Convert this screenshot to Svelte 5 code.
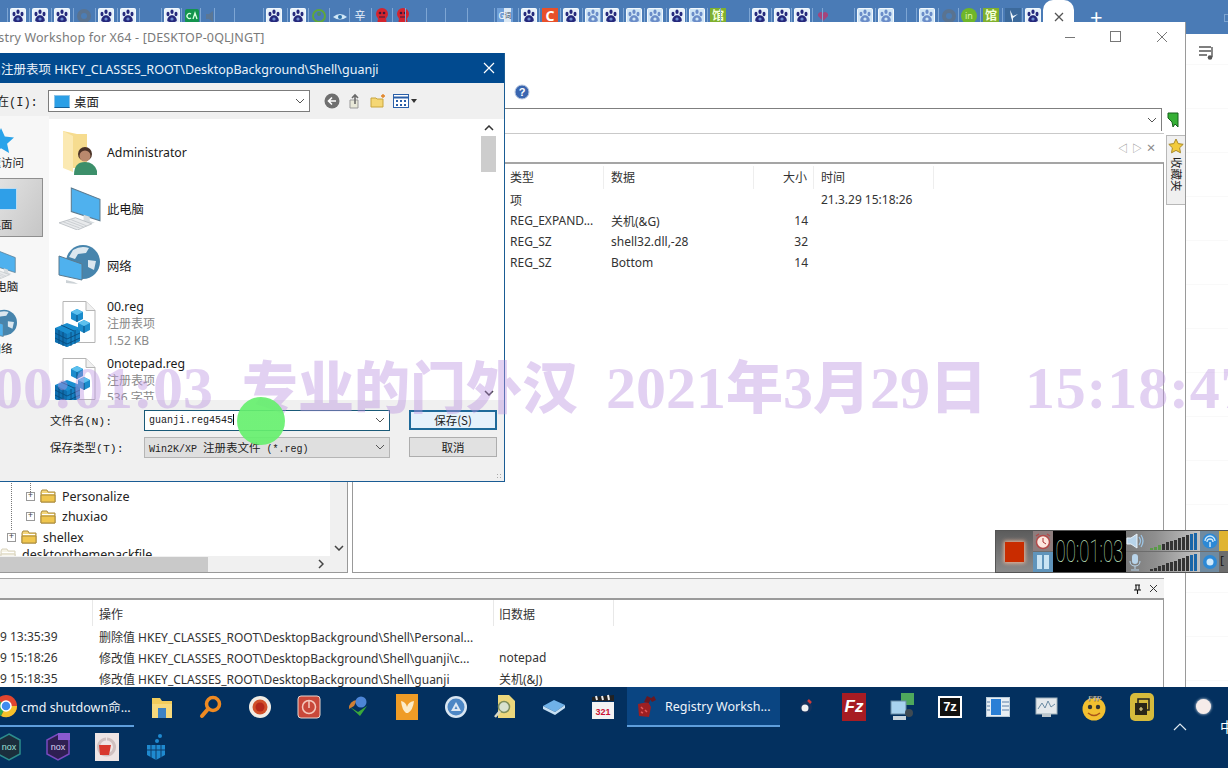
<script>
const tabSpots = [[18,'paw'],[40,'paw'],[62,'paw'],[84,'grey'],[106,'paw'],[128,'paw'],[150,'none'],[172,'paw'],[192,'ca'],[211,'spk'],[225,'none'],[245,'none'],[274,'paw'],[298,'paw'],[319,'ring'],[340,'eye'],[360,'zh'],[382,'red'],[403,'red'],[416,'none'],[437,'none'],[456,'none'],[478,'none'],[505,'g'],[529,'paw'],[550,'c'],[571,'paw'],[593,'pawl'],[611,'paw'],[634,'pawl'],[655,'pawl'],[677,'paw'],[697,'pawl'],[718,'guan'],[731,'none'],[760,'paw'],[782,'paw'],[802,'paw'],[823,'pink'],[833,'none'],[865,'pawl'],[886,'pawl'],[917,'none'],[927,'pawl'],[949,'grey'],[969,'in'],[991,'guan'],[1013,'bird'],[1033,'paw']];
const tabs = tabSpots.map((t,i)=>({type:t[1],w:(i<tabSpots.length-1?tabSpots[i+1][0]:1051)-t[0]}));
const rows = [
 {t:'项',d:'',s:'',time:'21.3.29 15:18:26'},
 {t:'REG_EXPAND...',d:'关机(&G)',s:'14',time:''},
 {t:'REG_SZ',d:'shell32.dll,-28',s:'32',time:''},
 {t:'REG_SZ',d:'Bottom',s:'14',time:''}
];
const logs = [
 ['9 13:35:39','删除值 HKEY_CLASSES_ROOT\\DesktopBackground\\Shell\\Personal...',''],
 ['9 15:18:26','修改值 HKEY_CLASSES_ROOT\\DesktopBackground\\Shell\\guanji\\c...','notepad'],
 ['9 15:18:35','修改值 HKEY_CLASSES_ROOT\\DesktopBackground\\Shell\\guanji','关机(&J)']
];
const bars = [0,1,2,3,4,5,6,7,8,9,10,11];
</script>

{#snippet tabIcon(type)}
  {#if type==='paw' || type==='pawl'}
    <svg width="16" height="16" viewBox="0 0 16 16"><rect x=".5" y=".5" width="15" height="15" rx="1" fill={type==='paw'?'#e6f1fa':'#cfe5f6'} stroke="#f2f8fd"/><g fill={type==='paw'?'#24287c':'#6a8cc8'}><ellipse cx="4" cy="6" rx="1.500" ry="2.300"/><ellipse cx="8" cy="3.800" rx="1.600" ry="2.300"/><ellipse cx="12" cy="6" rx="1.500" ry="2.300"/><path d="M8 7.200c2.800 0 4.800 2.800 4.800 5 0 1.800-2.400 1.800-4.800 1.800s-4.800 0-4.800-1.800c0-2.200 2-5 4.800-5z"/></g><circle cx="8" cy="11" r="1.600" fill={type==='paw'?'#6f8fd0':'#cfe6f6'}/></svg>
  {:else if type==='grey'}
    <svg width="16" height="16" viewBox="0 0 16 16"><circle cx="8" cy="8" r="7" fill="#5a7390"/><circle cx="8" cy="8" r="3" fill="#4c7db5"/></svg>
  {:else if type==='ca'}
    <svg width="16" height="16" viewBox="0 0 16 16"><rect x="1" y="1" width="14" height="14" rx="2" fill="#13944e"/><path d="M7 6a2.500 2.500 0 1 0 0 4M9 11l2-6 2 6" stroke="#d8ffe0" stroke-width="1.300" fill="none"/></svg>
  {:else if type==='spk'}
    <svg width="16" height="16" viewBox="0 0 16 16"><path d="M3 6h3l4-3v11l-4-3H3z" fill="#5b7795"/></svg>
  {:else if type==='ring'}
    <svg width="16" height="16" viewBox="0 0 16 16"><circle cx="8" cy="8" r="6" fill="none" stroke="#5fa63c" stroke-width="2"/><circle cx="8" cy="6" r="2" fill="#4f8f60"/></svg>
  {:else if type==='eye'}
    <svg width="16" height="16" viewBox="0 0 16 16"><path d="M1 9q7-6 14 0q-7 5-14 0z" fill="#cfe6f6"/><circle cx="8" cy="9" r="2" fill="#2a6fa8"/></svg>
  {:else if type==='zh'}
    <span class="tabtxt zh">辛</span>
  {:else if type==='red'}
    <svg width="16" height="16" viewBox="0 0 16 16"><ellipse cx="8" cy="6" rx="6" ry="6" fill="#d4242e"/><ellipse cx="8" cy="13" rx="4.500" ry="3" fill="#d4242e"/><circle cx="6" cy="5" r="1.300" fill="#3b1b3b"/><circle cx="10" cy="5" r="1.300" fill="#3b1b3b"/><path d="M5 9h6" stroke="#3b1b3b"/></svg>
  {:else if type==='g'}
    <span class="tabtxt gbox">G<i>词</i></span>
  {:else if type==='c'}
    <span class="tabtxt cbox">C</span>
  {:else if type==='guan'}
    <span class="tabtxt guan">馆</span>
  {:else if type==='pink'}
    <svg width="16" height="16" viewBox="0 0 16 16"><path d="M8 13L3 8a3 3 0 0 1 5-3a3 3 0 0 1 5 3z" fill="#a5447c"/></svg>
  {:else if type==='in'}
    <span class="tabtxt inbox">in</span>
  {:else if type==='bird'}
    <svg width="16" height="16" viewBox="0 0 16 16"><rect width="16" height="16" fill="#3c6a9c"/><path d="M5 2l3 6 5-2-5 4v5L6 9z" fill="#eef6fb"/></svg>
  {/if}
{/snippet}

{#snippet regIcon()}
  <svg class="fileicon" width="42" height="46" viewBox="0 0 42 46">
    <path d="M8 .5h23l9 9v32H8z" fill="#fff" stroke="#b5b5b5"/><path d="M31 .5v9h9" fill="#f0f0f0" stroke="#b5b5b5"/>
    <path d="M0 27l12-5 13 5v13l-13 6-12-5z" fill="#1a8ed0"/>
    <path d="M0 27l12 6v13l-12-5z" fill="#0f6fb0"/>
    <path d="M12 33l13-6v13l-13 6z" fill="#1480c2"/>
    <path d="M4 29v14M8 31v14M16 31v14M20 29v14M0 32l12 6 13-6M0 37l12 6 13-6M6 24l13 6" stroke="#0a4c7e" stroke-width=".9" fill="none"/>
    <path d="M16 11l6-3 6 3v7l-6 3-6-3z" fill="#1b8ccc"/><path d="M16 11l6 3 6-3-6-3z" fill="#5cc0ee"/><path d="M22 14v7" stroke="#0a4c7e" fill="none"/>
    <path d="M23 22l6-3 6 3v7l-6 3-6-3z" fill="#1b8ccc"/><path d="M23 22l6 3 6-3-6-3z" fill="#5cc0ee"/><path d="M29 25v7" stroke="#0a4c7e" fill="none"/>
  </svg>
{/snippet}

{#snippet monitor(w)}
  <svg width={w} height={w} viewBox="0 0 42 42">
    <path d="M13 1l28 11v21L13 24z" fill="#4fb1ee" stroke="#5c7a8e"/>
    <path d="M25 27l6 2v4l5 2-12 3-6-2 7-3z" fill="#d8dde0"/>
    <path d="M1 35l16-5 16 6-14 6z" fill="#e8eaec" stroke="#b7bcc0" stroke-width=".8"/>
    <path d="M5 34l16 6M9 33l16 6M13 32l15 6" stroke="#c0c4c8" stroke-width=".7"/>
  </svg>
{/snippet}

{#snippet globe(w)}
  <svg width={w} height={w} viewBox="0 0 42 42">
    <circle cx="25" cy="18" r="17" fill="#4785ad"/><path d="M15 6q8-5 16-2l-3 5-8 1-3 5-6-2zM30 16l8 1-2 9-6-3z" fill="#dbe7ef"/>
    <path d="M1 14l23 8v16L1 33z" fill="#4fb1ee" stroke="#5c7a8e" transform="translate(0 -2)"/>
    <path d="M8 36l8 2 4 2-12-1z" fill="#ccd2d6"/>
  </svg>
{/snippet}

{#snippet folder(pale)}
  <svg class="fold" width="17" height="14" viewBox="0 0 17 14"><path d="M1 3l1-2h5l1 2h7v10H1z" fill={pale?'#f6f3e6':'#f4d67c'} stroke={pale?'#d8d2bc':'#a98a3c'}/><path d="M1 6h14v7H1z" fill={pale?'#f8f6ee':'#f0c64e'} stroke={pale?'#d8d2bc':'#a98a3c'}/><path d="M2 4.500h12" stroke="#fff"/></svg>
{/snippet}

<div class="screen">
  <header class="tabbar">
    {#each tabs as t}
      <span class="slot" style="width:{t.w}px">{@render tabIcon(t.type)}</span>
    {/each}
    <span class="curtab"><svg width="10" height="10" viewBox="0 0 10 10"><path d="M1 1l8 8M9 1l-8 8" stroke="#555" stroke-width="1.300"/></svg></span>
    <span class="plus">+</span>
    <span class="winmin"></span>
  </header>

  <div class="pagearea">
    <svg class="note" width="18" height="16" viewBox="0 0 18 16"><path d="M1 2h12M1 6h12M1 10h8" stroke="#555" stroke-width="1.400"/><path d="M14 2v10" stroke="#555" stroke-width="1.400"/><circle cx="12" cy="12.500" r="2.300" fill="#555"/></svg>
  </div>

  <section class="regwin">
    <div class="rtitle">
      <span class="rtitletext">Registry Workshop for X64 - [DESKTOP-0QLJNGT]</span>
      <span class="wc"><svg width="12" height="12" viewBox="0 0 12 12"><path d="M1 6.500h10" stroke="#777"/></svg></span>
      <span class="wc"><svg width="12" height="12" viewBox="0 0 12 12"><rect x=".5" y=".5" width="10" height="10" fill="none" stroke="#777"/></svg></span>
      <span class="wc"><svg width="12" height="12" viewBox="0 0 12 12"><path d="M1 1l10 10M11 1L1 11" stroke="#777"/></svg></span>
    </div>
    <div class="rtool">
      <svg width="16" height="16" viewBox="0 0 16 16"><circle cx="8" cy="8" r="7" fill="#3a66b0" stroke="#b8c8e0"/><text x="8" y="12" text-anchor="middle" class="q">?</text></svg>
    </div>
    <div class="raddr">
      <div class="addrbox"><svg width="10" height="6" viewBox="0 0 10 6"><path d="M1 1l4 4 4-4" fill="none" stroke="#555"/></svg></div>
      <svg class="flag" width="14" height="16" viewBox="0 0 14 16"><path d="M2 1h10v14l-3-3-2 3-1-5-4-4z" fill="#35b035" stroke="#17611c"/></svg>
    </div>
    <div class="rstrip">
      <span class="nav">◁</span><span class="nav">▷</span><span class="nav x">×</span>
    </div>
    <div class="rmain">
      <div class="tree">
        <div class="treebody">
          <span class="dot a"></span><span class="dot b"></span>
          <div class="tnode lvl2"><span class="exp">+</span>{@render folder(false)}Personalize</div>
          <div class="tnode lvl2"><span class="exp">+</span>{@render folder(false)}zhuxiao</div>
          <div class="tnode lvl1"><span class="exp">+</span>{@render folder(false)}shellex</div>
          <div class="tnode lvl0">{@render folder(true)}desktopthemepackfile</div>
          <div class="vscroll"><svg width="10" height="6" viewBox="0 0 10 6"><path d="M1 1l4 4 4-4" fill="none" stroke="#444" stroke-width="1.500"/></svg></div>
        </div>
        <div class="hscroll"><span class="hthumb"></span><svg width="6" height="10" viewBox="0 0 6 10"><path d="M1 1l4 4-4 4" fill="none" stroke="#444" stroke-width="1.500"/></svg></div>
      </div>
      <div class="listp">
        <div class="lhead"><span class="c0"></span><span class="c1">类型</span><span class="c2">数据</span><span class="c3">大小</span><span class="c4">时间</span></div>
        {#each rows as r}
          <div class="lrow"><span class="c0"></span><span class="c1">{r.t}</span><span class="c2">{r.d}</span><span class="c3">{r.s}</span><span class="c4">{r.time}</span></div>
        {/each}
      </div>
    </div>
    <div class="logbar">
      <svg width="9" height="10" viewBox="0 0 9 10"><path d="M2 1h5M3 1v5M6 1v5M1 6h7M4.500 6v4" stroke="#111" stroke-width="1.100" fill="none"/></svg>
      <svg width="9" height="9" viewBox="0 0 9 9"><path d="M1 1l7 7M8 1L1 8" stroke="#333"/></svg>
    </div>
    <div class="logp">
      <div class="loghead"><span class="l0"></span><span class="l1">操作</span><span class="l2">旧数据</span></div>
      {#each logs as l}
        <div class="logrow"><span class="l0">{l[0]}</span><span class="l1">{l[1]}</span><span class="l2">{l[2]}</span></div>
      {/each}
    </div>
  </section>

  <aside class="favtab">
    <svg width="16" height="16" viewBox="0 0 16 16"><path d="M8 1l2.200 4.600 5 .7-3.600 3.500.9 5L8 12.400l-4.500 2.400.9-5L.8 6.300l5-.7z" fill="#f2cb3c" stroke="#a98a2a"/></svg>
    <span class="favtext">收藏夹</span>
  </aside>

  <section class="dialog">
    <div class="dtitle"><span>导出注册表项 HKEY_CLASSES_ROOT\DesktopBackground\Shell\guanji</span><svg width="12" height="12" viewBox="0 0 12 12"><path d="M1 1l10 10M11 1L1 11" stroke="#fff" stroke-width="1.200"/></svg></div>
    <div class="dtool">
      <span class="savein">保存在(I):</span>
      <div class="dcombo">
        <span class="bluebox"></span><span class="dcombot">桌面</span>
        <svg width="10" height="6" viewBox="0 0 10 6"><path d="M1 1l4 4 4-4" fill="none" stroke="#555"/></svg>
      </div>
      <div class="dicons">
        <svg width="16" height="16" viewBox="0 0 16 16"><circle cx="8" cy="8" r="7.500" fill="#6f6f6f"/><path d="M12 8H5M8 4.500L4.500 8 8 11.500" stroke="#fff" stroke-width="1.600" fill="none"/></svg>
        <svg width="16" height="16" viewBox="0 0 16 16"><path d="M3 7h8v8H3z" fill="#e8e8d8" stroke="#999"/><path d="M8 11V2M5 5l3-3 3 3" stroke="#6a6a6a" stroke-width="1.600" fill="none"/></svg>
        <svg width="16" height="16" viewBox="0 0 16 16"><path d="M1 5h5l1 1h6v8H1z" fill="#f5d775" stroke="#c9a53c"/><path d="M13 1v4M11 3h4" stroke="#e08020" stroke-width="1.300"/></svg>
        <span class="viewbtn"><svg width="16" height="14" viewBox="0 0 16 14"><rect x=".5" y=".5" width="15" height="13" fill="#fff" stroke="#2a5fa8"/><path d="M1 3.500h14" stroke="#2a5fa8" stroke-width="2"/><path d="M3 6h2v2H3zM7 6h2v2H7zM11 6h2v2h-2zM3 10h2v2H3zM7 10h2v2H7zM11 10h2v2h-2z" fill="#2a5fa8"/></svg><i></i></span>
      </div>
    </div>
    <div class="dmid">
      <nav class="places">
        <div class="place first"><svg width="28" height="28" viewBox="0 0 28 28"><path d="M14 1l3.800 8.600 9.200 1-6.900 6.200 2 9.200-8.100-4.700-8.100 4.700 2-9.200L1 10.600l9.200-1z" fill="#29a3ea"/></svg><span>快速访问</span></div>
        <div class="place sel"><span class="deskicon"></span><span>桌面</span></div>
        <div class="place">{@render monitor(30)}<span>此电脑</span></div>
        <div class="place">{@render globe(32)}<span>网络</span></div>
      </nav>
      <div class="flist">
        <div class="fitem">
          <svg class="fileicon" width="42" height="46" viewBox="0 0 42 46"><path d="M8 1l14 3h10v34H8z" fill="#f6dc8f"/><path d="M8 1l10 5v36l-10-4z" fill="#fbe9b2"/><circle cx="30" cy="24" r="7" fill="#4a3226"/><circle cx="30" cy="26" r="5.500" fill="#b9896d"/><path d="M19 45q0-13 11-13t13 13z" fill="#3c8f6a"/></svg>
          <div class="ftext"><b>Administrator</b></div>
        </div>
        <div class="fitem">
          <span class="fileicon shift">{@render monitor(43)}</span>
          <div class="ftext"><b>此电脑</b></div>
        </div>
        <div class="fitem">
          <span class="fileicon shift">{@render globe(42)}</span>
          <div class="ftext"><b>网络</b></div>
        </div>
        <div class="fitem">
          {@render regIcon()}
          <div class="ftext"><b>00.reg</b><i>注册表项</i><i>1.52 KB</i></div>
        </div>
        <div class="fitem">
          {@render regIcon()}
          <div class="ftext"><b>0notepad.reg</b><i>注册表项</i><i>536 字节</i></div>
        </div>
        <div class="dscroll">
          <svg width="10" height="6" viewBox="0 0 10 6"><path d="M1 5l4-4 4 4" fill="none" stroke="#333" stroke-width="1.500"/></svg>
          <span class="dthumb"></span>
          <svg class="dn" width="10" height="6" viewBox="0 0 10 6"><path d="M1 1l4 4 4-4" fill="none" stroke="#333" stroke-width="1.500"/></svg>
        </div>
      </div>
    </div>
    <div class="dform">
      <div class="frow">
        <label class="flabel" for="fname">文件名(N):</label>
        <div class="finput focus"><span id="fname" class="mono">guanji.reg4545<u></u></span><svg width="10" height="6" viewBox="0 0 10 6"><path d="M1 1l4 4 4-4" fill="none" stroke="#555"/></svg></div>
        <button class="dbtn primary">保存(S)</button>
      </div>
      <div class="frow">
        <span class="flabel">保存类型(T):</span>
        <div class="finput drop"><span class="mono">Win2K/XP <b>注册表文件</b> (*.reg)</span><svg width="10" height="6" viewBox="0 0 10 6"><path d="M1 1l4 4 4-4" fill="none" stroke="#555"/></svg></div>
        <button class="dbtn">取消</button>
      </div>
      <span class="grip"></span>
    </div>
  </section>

  <div class="recorder">
    <div class="recstop"><span></span></div>
    <div class="recmini">
      <span class="alarm"><svg width="18" height="18" viewBox="0 0 18 18"><circle cx="9" cy="10" r="6.500" fill="#fde8e0" stroke="#b34a4a" stroke-width="1.500"/><path d="M9 6v4l3 2" stroke="#a33" fill="none"/><path d="M2 4l3-2M16 4l-3-2" stroke="#b34a4a" stroke-width="1.500"/></svg></span>
      <span class="pause"><i></i><i></i></span>
    </div>
    <div class="timer"><span>00:01:03</span></div>
    <div class="vols">
      <div class="vol">
        <svg width="18" height="18" viewBox="0 0 18 18"><path d="M1 6h4l6-4v14l-6-4H1z" fill="#b8d4ea" stroke="#e8f2fa"/><path d="M13 5q3 4 0 8M15 3q4 6 0 12" stroke="#9cc4e4" fill="none" stroke-width="1.300"/></svg>
        <span class="bars top">{#each bars as b}<i class:g={b<3} class:b={b>9} style="height:{2+b*1.400}px"></i>{/each}</span>
      </div>
      <div class="vol">
        <svg width="18" height="18" viewBox="0 0 18 18"><rect x="6" y="1" width="6" height="10" rx="3" fill="#b8d4ea"/><path d="M4 8q0 5 5 5t5-5M9 13v3M5 17h8" stroke="#b8d4ea" fill="none"/></svg>
        <span class="bars">{#each bars as b}<i class:b={b>9} style="height:{2+b*1.400}px"></i>{/each}</span>
      </div>
    </div>
    <div class="rectools">
      <span class="rt"><svg width="16" height="16" viewBox="0 0 16 16"><circle cx="8" cy="8" r="7.500" fill="#2c89d6"/><path d="M3 8a5 5 0 0 1 10 0M5 9a3 3 0 0 1 6 0" stroke="#cfe9fb" fill="none" stroke-width="1.300"/><path d="M8 9v5" stroke="#cfe9fb" stroke-width="1.500"/></svg></span>
      <span class="rt"><svg width="16" height="16" viewBox="0 0 16 16"><circle cx="8" cy="8" r="7" fill="#2c89d6"/><circle cx="8" cy="8" r="3.500" fill="#cfe9fb"/></svg></span>
    </div>
    <div class="recedge"><span class="yel"></span><span class="brk">[ ]</span></div>
  </div>

  <div class="watermark"><span>00:01:03</span> <b>专业的门外汉</b> <span class="d">2021<b>年</b>3<b>月</b>29<b>日</b></span> <span class="t">15:18:47</span></div>
  <span class="pointer"></span>

  <footer class="taskbar">
    <div class="tbrow">
      <div class="tbtask">
        <svg width="24" height="24" viewBox="0 0 24 24"><circle cx="12" cy="12" r="11" fill="#e2452f"/><path d="M12 12L23 12A11 11 0 0 1 7 22z" fill="#f6c12a"/><path d="M12 12L7 22A11 11 0 0 1 3 5z" fill="#2fa84f"/><circle cx="12" cy="12" r="5" fill="#3f8cf0" stroke="#fff" stroke-width="1.500"/></svg>
        <span>cmd shutdown命...</span>
      </div>
      <span class="tbi w"><svg width="24" height="24" viewBox="0 0 24 24"><path d="M2 3h8l2 3h10v17H2z" fill="#f2cc5c"/><path d="M2 9h20v14H2z" fill="#f7d97c"/><rect x="8" y="13" width="8" height="10" fill="#3e82c4"/></svg></span>
      <span class="tbi w"><svg width="24" height="24" viewBox="0 0 24 24"><circle cx="14" cy="9" r="6.500" fill="none" stroke="#ef8a22" stroke-width="3.500"/><path d="M9 14l-6 7" stroke="#ef8a22" stroke-width="4" stroke-linecap="round"/></svg></span>
      <span class="tbi w"><svg width="24" height="24" viewBox="0 0 24 24"><circle cx="12" cy="12" r="11" fill="#f1ece4"/><circle cx="12" cy="12" r="7.500" fill="#d0502a"/><circle cx="12" cy="12" r="4.500" fill="#b6281a"/></svg></span>
      <span class="tbi w"><svg width="24" height="24" viewBox="0 0 24 24"><rect x="1" y="1" width="22" height="22" rx="3" fill="#c9483a" stroke="#e7d5cf"/><circle cx="12" cy="12" r="6.500" fill="none" stroke="#f4c8bc" stroke-width="1.500"/><path d="M12 6v7" stroke="#f4c8bc" stroke-width="1.500"/></svg></span>
      <span class="tbi w"><svg width="24" height="24" viewBox="0 0 24 24"><path d="M3 14a8 8 0 0 1 8-9l-3 6z" fill="#d07e32"/><circle cx="15" cy="7" r="5.500" fill="#4d85d6"/><path d="M4 12l8 5 9-6-7 10z" fill="#3aa83a"/></svg></span>
      <span class="tbi w"><svg width="24" height="26" viewBox="0 0 24 26"><rect x="1" y="0" width="22" height="26" fill="#ef9c26"/><path d="M6 7q5 1 6 6 1-5 7-6-1 9-6 12h-2q-4-3-5-12z" fill="#fcecc8"/></svg></span>
      <span class="tbi w"><svg width="24" height="24" viewBox="0 0 24 24"><circle cx="12" cy="12" r="11" fill="#d9e6f2"/><circle cx="12" cy="12" r="8.500" fill="#4d87c5"/><path d="M7 16l5-9 5 9z" fill="#dfe9f3"/><path d="M10.500 14l1.500-3 1.500 3z" fill="#4d87c5"/></svg></span>
      <span class="tbi w"><svg width="24" height="26" viewBox="0 0 24 26"><path d="M5 1h11l6 6v17H5z" fill="#ecd77c"/><circle cx="11" cy="13" r="5.500" fill="#d8e2d0" stroke="#7f8f5c" stroke-width="1.500"/><path d="M7 17l-5 6" stroke="#d8d8c8" stroke-width="2.500"/></svg></span>
      <span class="tbi w"><svg width="24" height="24" viewBox="0 0 24 24"><path d="M1 11l11-6 11 5-10 7z" fill="#6fb1e8"/><path d="M1 11l12 6v3L1 14zM13 17l10-7v3l-10 7z" fill="#c6dff3"/></svg></span>
      <span class="tbi w"><svg width="24" height="26" viewBox="0 0 24 26"><rect x="1" y="8" width="22" height="17" fill="#f3f3f3"/><path d="M1 3l22-2v6H1z" fill="#222"/><path d="M5 2l1 4M11 2l1 4M17 1l1 5" stroke="#eee" stroke-width="2"/><text x="12" y="21" text-anchor="middle" class="cal">321</text></svg></span>
      <div class="tbtask active">
        <svg width="24" height="24" viewBox="0 0 24 24"><path d="M3 10l10-2 3 5-2 10-10-1z" fill="#9d1f22"/><path d="M9 8l3-6 4 2-2 5zM15 5l4-3 2 4-4 2z" fill="#6a1820"/><path d="M6 13l2 2M10 16l2 2M6 18l2 1" stroke="#e25a5a" stroke-width="1.500"/></svg>
        <span>Registry Worksh...</span>
      </div>
      <span class="tbi gap"><svg width="20" height="20" viewBox="0 0 20 20"><circle cx="10" cy="10" r="6" fill="#15325c"/><circle cx="9" cy="11" r="3.500" fill="#f2f2f2"/><path d="M12 3l3 3" stroke="#d43a3a" stroke-width="2.500"/></svg></span>
      <span class="tbi"><span class="fz">Fz</span></span>
      <span class="tbi"><svg width="24" height="28" viewBox="0 0 24 28"><rect x="11" y="0" width="13" height="12" fill="#4ea85c"/><rect x="1" y="8" width="15" height="13" fill="#a8d2ee" stroke="#6a8ba3"/><path d="M3 23h13v4H3z" fill="#c8d4dc"/><circle cx="19" cy="20" r="4" fill="#3f4a52"/></svg></span>
      <span class="tbi"><span class="sz">7z</span></span>
      <span class="tbi"><svg width="24" height="20" viewBox="0 0 24 20"><rect x=".5" y=".5" width="23" height="19" fill="#e7eef4" stroke="#b9cad8"/><rect x="5" y="2" width="10" height="16" fill="#2a7fd6"/><path d="M1 5h3M1 9h3M1 13h3M16 5h7M16 9h7M16 13h7" stroke="#5a7fa8"/></svg></span>
      <span class="tbi"><svg width="24" height="24" viewBox="0 0 24 24"><rect x="2" y="3" width="21" height="16" fill="#e4e9ec" stroke="#9fb0bb"/><path d="M4 14l4-6 3 5 3-7 3 6 4-3" stroke="#6a8ba3" fill="none"/><path d="M8 19h9v3H8z" fill="#bcc6cc"/></svg></span>
      <span class="tbi"><svg width="26" height="28" viewBox="0 0 26 28"><circle cx="13" cy="16" r="11.500" fill="#f2bf30"/><circle cx="9" cy="14" r="2.200" fill="#333"/><circle cx="17" cy="14" r="2.200" fill="#333"/><path d="M7 20q6 5 12 0" stroke="#a8541a" stroke-width="1.500" fill="none"/><text x="14" y="8" text-anchor="middle" class="ftp">FTP</text></svg></span>
      <span class="tbi"><svg width="24" height="28" viewBox="0 0 24 28"><rect x="0" y="0" width="24" height="28" rx="5" fill="#d6ba3c"/><rect x="8" y="6" width="11" height="11" fill="none" stroke="#222" stroke-width="1.500"/><rect x="5" y="10" width="12" height="12" fill="#2a2618"/><path d="M9 16h4M11 14v4" stroke="#e8d88c" stroke-width="1.200"/></svg></span>
      <span class="orb"></span>
    </div>
    <div class="tbrow second">
      <span class="tbi w"><svg width="26" height="28" viewBox="0 0 26 28"><path d="M13 1l11 6v14l-11 6-11-6V7z" fill="#1b2e3c" stroke="#2d8c8c" stroke-width="1.500"/><text x="13" y="17" text-anchor="middle" class="nox teal">nox</text></svg></span>
      <span class="tbi w"><svg width="26" height="28" viewBox="0 0 26 28"><path d="M13 1l11 6v14l-11 6-11-6V7z" fill="#2e1f52" stroke="#7a4ac0" stroke-width="1.500"/><text x="13" y="17" text-anchor="middle" class="nox">nox</text><rect x="13" y="0" width="12" height="7" fill="#8a5ad0"/></svg></span>
      <span class="tbi w"><svg width="24" height="28" viewBox="0 0 24 28"><rect width="24" height="28" fill="#eee4e4"/><path d="M12 6a8 8 0 1 1-1 0" fill="none" stroke="#d0c0c0" stroke-width="3"/><path d="M4 12h12l-2 10H5zM8 8l4 2" fill="#d8382e"/></svg></span>
      <span class="tbi w"><svg width="22" height="28" viewBox="0 0 22 28"><path d="M2 12h18v10l-9 5-9-5z" fill="#1f8ad0"/><path d="M6 12v13M11 12v15M16 12v13M2 17h18" stroke="#0c3a6a"/><circle cx="15" cy="3" r="2" fill="#1f8ad0"/><circle cx="12" cy="8" r="2" fill="#1f8ad0"/></svg></span>
      <span class="ime">中</span>
      <svg class="caret" width="14" height="8" viewBox="0 0 14 8"><path d="M1 7l6-6 6 6" fill="none" stroke="#dfe8f0" stroke-width="1.200"/></svg>
    </div>
  </footer>
</div>

<style>
:global(body){margin:0;background:#fff;}
:global(*){box-sizing:border-box;}
.screen{position:relative;width:1228px;height:768px;overflow:hidden;display:flex;flex-direction:column;font-family:"Noto Sans","Noto Sans CJK SC",sans-serif;font-size:12px;color:#222;background:#fff;}
.tabbar{height:34px;flex:none;background:#4a7bb6;display:flex;align-items:flex-start;padding:8px 0 0 10px;position:relative;}
.slot{display:block;flex:none;height:16px;position:relative;}
.slot::before{content:"";position:absolute;left:-3px;top:0;width:1px;height:16px;background:#7ea6d4;}
.slot svg{display:block;}
.tabtxt{display:flex;width:16px;height:16px;align-items:center;justify-content:center;font-size:12px;line-height:16px;color:#fff;}
.tabtxt.zh{font-size:11px;color:#e8f0fa;}
.gbox{background:#6f9fd8;font-size:8px;color:#fff;}.gbox i{font-style:normal;font-size:7px;background:#dce9f5;color:#345;}
.cbox{background:#e8502a;font-weight:700;font-size:14px;}
.guan{background:#7fb02e;color:#f4ffd8;font-weight:700;}
.inbox{background:#6fb62a;border-radius:8px;color:#ddf5a8;font-size:9px;}
.curtab{position:absolute;left:1043px;top:0;width:31px;height:28px;background:#fff;border-radius:10px 10px 0 0;display:flex;justify-content:center;padding-top:12px;}
.plus{position:absolute;left:1090px;top:3px;font-size:22px;line-height:26px;color:#fff;}
.winmin{position:absolute;left:1224px;top:14px;width:5px;height:8px;border:1px solid #7da3cf;}
.pagearea{flex:1;position:relative;background:repeating-linear-gradient(180deg,#fff 0 30px,#f9f9f9 30px 31px,#fff 31px 44px);}
.note{position:absolute;left:1198px;top:11px;}
.regwin{position:absolute;left:0;top:22px;width:1186px;height:665px;background:#fff;border-right:1px solid #9a9a9a;display:flex;flex-direction:column;}
.rtitle{height:30px;flex:none;display:flex;align-items:center;position:relative;}
.rtitletext{margin-left:-28px;font-size:12.500px;color:#7a7a7a;letter-spacing:.15px;flex:1;white-space:nowrap;}
.wc{width:46px;display:flex;justify-content:center;flex:none;}
.rtool{height:56px;flex:none;display:flex;align-items:flex-end;padding:0 0 8px 514px;}
.q{font:700 11px "Liberation Sans",sans-serif;fill:#fff;}
.raddr{height:23px;flex:none;display:flex;align-items:center;}
.addrbox{width:1162px;height:23px;border-top:1px solid #7f7f7f;border-right:1px solid #7f7f7f;display:flex;justify-content:flex-end;align-items:center;padding-right:4px;}
.flag{margin-left:4px;}
.rstrip{height:31px;margin-top:2px;width:1164px;flex:none;border-top:1px solid #c9c9c9;border-bottom:2px solid #a5a5a5;display:flex;justify-content:flex-end;align-items:center;padding:0 8px 2px;gap:4px;}
.nav{font-size:10px;width:10px;text-align:center;color:#8a8a8a;}
.nav.x{font-size:15px;}
.rmain{height:410px;flex:none;width:1164px;margin-top:-1px;display:flex;justify-content:space-between;}
.tree{width:348px;height:100%;border-right:1px solid #999;border-bottom:1px solid #999;display:flex;flex-direction:column;justify-content:flex-end;}
.treebody{height:86px;position:relative;padding-top:16px;overflow:hidden;flex:none;}
.dot{position:absolute;top:0;border-left:1px dotted #777;width:0;}
.dot.a{left:11px;height:60px;}
.dot.b{left:30px;height:22px;}
.tnode{height:20.500px;display:flex;align-items:center;font-size:12.500px;color:#222;white-space:nowrap;position:relative;}
.lvl2{padding-left:26px;}.lvl1{padding-left:7px;}.lvl0{padding-left:0;margin-top:-3px;}
.exp{width:9px;height:9px;border:1px solid #999;font:9px/7px "Liberation Mono",monospace;text-align:center;color:#444;margin-right:5px;flex:none;background:#fff;}
.fold{margin-right:5px;flex:none;display:block;}
.vscroll{position:absolute;right:0;top:0;width:17px;height:100%;background:#f0f0f0;display:flex;align-items:flex-end;justify-content:center;padding-bottom:5px;}
.hscroll{height:16px;flex:none;background:#f0f0f0;display:flex;align-items:center;justify-content:space-between;padding-right:23px;}
.hthumb{width:208px;height:15px;background:#c9c9c9;}
.listp{width:812px;height:100%;border-left:1px solid #999;border-right:1px solid #999;border-bottom:1px solid #999;padding-top:3px;}
.lhead,.lrow{display:flex;align-items:center;height:21px;font-size:12px;color:#333;}
.lhead{height:23px;}
.lhead span{height:23px;line-height:23px;border-right:1px solid #eeeeee;}
.c0{width:150px;flex:none;}
.c1{width:101px;padding-left:7px;flex:none;white-space:nowrap;overflow:hidden;}
.c2{width:150px;padding-left:7px;flex:none;}
.c3{width:60px;padding-right:6px;text-align:right;flex:none;}
.c4{width:120px;padding-left:7px;flex:none;}
.logbar{height:22px;margin-top:5px;width:1164px;flex:none;background:#f3f3f3;border-top:1px solid #a8a8a8;border-bottom:2px solid #9a9a9a;display:flex;justify-content:flex-end;align-items:center;gap:7px;padding-right:6px;}
.logp{flex:1;width:1164px;border-right:1px solid #999;overflow:hidden;}
.loghead,.logrow{display:flex;align-items:center;height:21px;font-size:12px;color:#333;white-space:nowrap;}
.loghead{height:26px;}.loghead span{height:26px;line-height:30px;border-right:1px solid #e8e8e8;}
.l0{width:93px;flex:none;}.l1{width:401px;padding-left:6px;flex:none;overflow:hidden;}.l2{padding-left:5px;width:120px;flex:none;}
.favtab{position:absolute;left:1166px;top:135px;width:19px;height:70px;background:#f0f0f0;border:1px solid #b8b8b8;border-right:none;display:flex;flex-direction:column;align-items:center;padding-top:2px;}
.favtext{writing-mode:vertical-rl;text-orientation:sideways;font-size:11.500px;line-height:14px;color:#222;margin-top:3px;}
.dialog{position:absolute;left:-62px;top:53px;width:567px;height:429px;background:#f0f0f0;border:1px solid #1a5c94;border-top:none;display:flex;flex-direction:column;}
.dtitle{height:30px;flex:none;background:#014a8f;color:#eaf2fa;font-size:12.500px;display:flex;align-items:center;justify-content:space-between;padding:0 9px 0 37px;white-space:nowrap;}
.dtool{height:36px;flex:none;display:flex;align-items:center;padding-left:34px;}
.savein{width:75px;flex:none;font:12px "Liberation Mono","Noto Sans CJK SC",monospace;white-space:nowrap;}
.dcombo{width:262px;height:22px;background:#fff;border:1px solid #7c7c7c;display:flex;align-items:center;padding:0 4px 0 5px;flex:none;}
.bluebox{width:16px;height:13px;background:#2b9fe6;border:1px solid #8fc4e8;border-bottom-color:#155e96;flex:none;}
.dcombot{flex:1;margin-left:4px;font-size:12.500px;}
.dicons{display:flex;align-items:center;gap:7px;margin-left:14px;}
.viewbtn{display:flex;align-items:center;gap:2px;}
.viewbtn i{border:3.500px solid transparent;border-top:4px solid #333;border-bottom:none;}
.dmid{height:281px;flex:none;display:flex;}
.places{width:110px;flex:none;background:#f7f7f7;padding:0 6px 0 20px;margin-top:-3px;display:flex;flex-direction:column;gap:3px;overflow:hidden;}
.place{height:59px;display:flex;flex-direction:column;align-items:center;justify-content:flex-end;padding-bottom:4px;font-size:11.500px;line-height:15px;color:#222;flex:none;border:1px solid transparent;}
.place svg{display:block;}
.place.sel{background:linear-gradient(120deg,#f0f0f0,#c6c6c6);border-color:#8f8f8f;}
.deskicon{width:32px;height:22px;margin-bottom:7px;background:#2f9fe8;border:1px solid #bcdcf2;}
.flist{flex:1;background:#fff;position:relative;padding-top:5px;overflow:hidden;}
.fitem{height:57px;display:flex;align-items:center;position:relative;padding-left:58px;}
.fileicon{position:absolute;left:6px;top:6px;display:block;line-height:0;}
.fileicon.shift{left:9px;}
.ftext{display:flex;flex-direction:column;font-size:12.300px;}
.ftext b{font-weight:400;line-height:17px;color:#1a1a1a;}
.ftext i{font-style:normal;line-height:17px;color:#8a8a8a;font-size:12px;}
.dscroll{position:absolute;right:0;top:0;bottom:0;width:23px;background:#fff;display:flex;flex-direction:column;align-items:center;padding:6px 8px 4px 0;}
.dthumb{width:15px;height:36px;background:#cdcdcd;margin-top:5px;flex:none;}
.dn{margin-top:auto;}
.dform{flex:1;position:relative;padding:10px 7px 0 111px;display:flex;flex-direction:column;gap:6.500px;}
.frow{display:flex;align-items:center;height:20.500px;}
.flabel{width:94px;flex:none;font:11.500px "Liberation Mono","Noto Sans CJK SC",monospace;color:#222;white-space:nowrap;}
.finput{width:246px;height:21px;flex:none;display:flex;align-items:center;justify-content:space-between;padding:0 4px 0 4px;border:1px solid #aaa;}
.finput.focus{background:#fff;border-color:#1a5a78;}
.finput.drop{background:#dfdfdf;border-color:#b5b5b5;}
.mono{font:10px "Liberation Mono","Noto Sans CJK SC",monospace;color:#222;white-space:nowrap;}
.mono b{font-weight:400;font-size:11.500px;}
.mono u{display:inline-block;width:1px;height:11px;background:#000;vertical-align:-2px;}
.dbtn{margin-left:19px;width:88px;height:20px;flex:none;border:1px solid #adadad;background:#e1e1e1;font:11.500px "Noto Sans CJK SC",sans-serif;color:#222;padding:0;}
.dbtn.primary{border:2px solid #1e6a9a;background:#e5f1fb;}
.grip{position:absolute;right:1px;bottom:1px;width:7px;height:7px;background:radial-gradient(circle,#aaa 0 1px,transparent 1px) 0 0/3px 3px;}
.recorder{position:absolute;left:995px;top:530px;width:233px;height:43px;background:#6c6c6c;border:1px solid #555;border-right:none;display:flex;}
.recstop{width:37px;flex:none;background:linear-gradient(#5c5c5c,#8a8a8a);display:flex;align-items:center;justify-content:center;}
.recstop span{width:19px;height:20px;background:#c92c00;box-shadow:0 0 4px 1px #f3b89c;}
.recmini{width:20px;flex:none;display:flex;flex-direction:column;gap:1px;}
.alarm,.pause{flex:1;display:flex;align-items:center;justify-content:center;gap:2px;}
.alarm{background:#8d7d7d;}.pause{background:#5f94bb;}
.pause i{width:5px;height:14px;background:#c8e3f3;}
.timer{width:73px;flex:none;background:#000;overflow:hidden;display:flex;align-items:center;justify-content:center;}
.timer span{font:100 31px Roboto,sans-serif;color:#b5dcb5;transform:scaleX(.6);white-space:nowrap;}
.vols{width:74px;flex:none;display:flex;flex-direction:column;gap:1px;}
.vol{flex:1;display:flex;align-items:center;background:linear-gradient(90deg,#7a7a7a,#8f8f8f 40%,#c4c4c4);overflow:hidden;}
.vol svg{flex:none;}
.bars{display:flex;align-items:flex-end;gap:1px;margin-left:6px;height:18px;}
.bars i{display:block;width:3px;background:#333;}
.bars i.g{background:#5b9a4a;}
.bars i.b{background:#1a66a8;}
.rectools{width:19px;flex:none;display:flex;flex-direction:column;gap:1px;}
.rt{flex:1;background:#6f8aa0;display:flex;align-items:center;justify-content:center;}
.recedge{flex:1;display:flex;flex-direction:column;gap:1px;}
.yel{flex:1;background:#e0b432;}
.brk{flex:1;background:#6c6c6c;font:10px/20px "Liberation Mono",monospace;color:#111;overflow:hidden;white-space:nowrap;}
.watermark{position:absolute;left:-7px;top:349px;font:700 60px/78px "Liberation Serif","Noto Sans CJK SC",serif;color:rgba(185,145,225,.42);white-space:nowrap;pointer-events:none;word-spacing:14px;}
.watermark > b{font-size:56px;}
.watermark .d b{font-size:57px;}
.watermark .d{margin-left:-1px;}
.watermark .t{margin-left:9px;letter-spacing:.8px;}
.pointer{position:absolute;left:237px;top:397px;width:48px;height:48px;border-radius:50%;background:radial-gradient(circle at 50% 60%,#66f06e 0 72%,#7dd884);opacity:.92;}
.taskbar{position:absolute;left:0;bottom:0;width:1228px;height:81px;background:#03305f;display:flex;flex-direction:column;color:#fff;}
.tbrow{height:40px;display:flex;align-items:center;position:relative;flex:none;}
.second{margin-left:-16px;}
.tbtask{width:134px;height:40px;display:flex;align-items:center;gap:3px;border-bottom:2px solid #5e9edc;font-size:12.500px;color:#eef4fa;white-space:nowrap;margin-right:3px;flex:none;}
.tbtask svg{margin-left:-6px;flex:none;}
.tbtask.active{width:153px;margin:0;background:#0a4582;padding-left:8px;gap:6px;}
.tbtask.active svg{margin:0;}
.tbi{width:48px;height:40px;display:flex;align-items:center;justify-content:center;flex:none;}
.tbi.w{width:49px;}
.gap{margin-left:2px;}
.cal{font:700 9px "Liberation Sans",sans-serif;fill:#c13;}
.ftp{font:700 7px "Liberation Sans",sans-serif;fill:#fff;stroke:#222;stroke-width:.3px;}
.nox{font:9px "Liberation Sans",sans-serif;fill:#dcd0f0;}.teal{fill:#9fe0d8;}
.fz{width:24px;height:28px;background:#a71c23;color:#fff;font:italic 700 17px/28px "Liberation Sans",sans-serif;text-align:center;}
.sz{width:24px;height:22px;background:#111;border:2px solid #fff;color:#fff;font:700 13px/18px "Liberation Sans",sans-serif;text-align:center;}
.orb{position:absolute;left:1196px;top:12px;width:15px;height:15px;border-radius:50%;background:#f6ecea;box-shadow:0 0 3px #fff;}
.ime{position:absolute;left:1236px;top:-7px;font-size:14px;line-height:14px;color:#fff;}
.caret{position:absolute;left:1189px;top:-4px;}
</style>
